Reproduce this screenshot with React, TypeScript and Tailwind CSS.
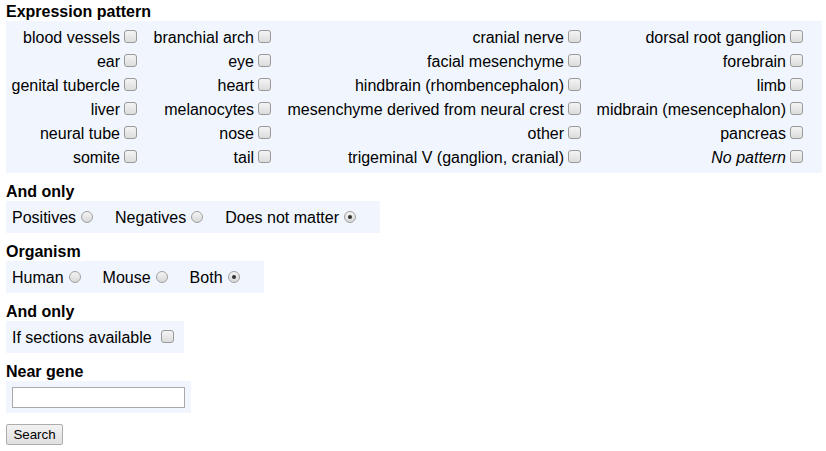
import React from "react";

const Checkbox = ({ className = "" }: { className?: string }) => (
  <span
    className={`inline-block w-[13px] h-[13px] shrink-0 rounded-[3px] border border-[#999999] bg-gradient-to-b from-[#f4f4f4] to-[#dcdcdc] ${className}`}
  />
);

const Radio = ({ checked = false }: { checked?: boolean }) => (
  <span className="ml-[5px] mr-[3px] mb-[3px] inline-flex w-[12px] h-[12px] shrink-0 items-center justify-center rounded-full border border-[#a0a0a0] bg-gradient-to-b from-[#f4f4f4] to-[#d8d8d8]">
    {checked && <span className="block w-[4px] h-[4px] rounded-full bg-[#333333]" />}
  </span>
);

const rows: [string, string, string, string][] = [
  ["blood vessels", "branchial arch", "cranial nerve", "dorsal root ganglion"],
  ["ear", "eye", "facial mesenchyme", "forebrain"],
  ["genital tubercle", "heart", "hindbrain (rhombencephalon)", "limb"],
  ["liver", "melanocytes", "mesenchyme derived from neural crest", "midbrain (mesencephalon)"],
  ["neural tube", "nose", "other", "pancreas"],
  ["somite", "tail", "trigeminal V (ganglion, cranial)", "No pattern"],
];

const Cell = ({ label }: { label: string }) => (
  <div className="flex h-[24px] items-center justify-end whitespace-nowrap">
    <span className={label === "No pattern" ? "italic" : ""}>{label}</span>
    <Checkbox className="ml-[4px] mr-[3px] mb-[4px]" />
  </div>
);

const Heading = ({ children }: { children: React.ReactNode }) => (
  <div className="font-bold text-[16px] leading-[19px] text-black">{children}</div>
);

export default function App() {
  return (
    <div
      className="pl-[6px] pr-[4px] pt-[2px] text-[16px] text-black bg-white min-h-[451px]"
      style={{ fontFamily: '"Liberation Sans", Arial, sans-serif' }}
    >
      <Heading>Expression pattern</Heading>
      <div className="bg-[#f1f6fe] pt-[5px] pb-[3px] pl-[6px]">
        <div className="grid grid-cols-[128px_119px_295px_207px] gap-x-[15px]">
          {rows.map((r, i) => (
            <React.Fragment key={i}>
              {r.map((l) => (
                <Cell key={l} label={l} />
              ))}
            </React.Fragment>
          ))}
        </div>
      </div>

      <div className="mt-[9px]">
        <Heading>And only</Heading>
        <div className="inline-flex h-[32px] items-center gap-[19px] bg-[#f1f6fe] pl-[6px] pr-[21px] pt-[2px]">
          <div className="flex items-center">
            Positives
            <Radio />
          </div>
          <div className="flex items-center">
            Negatives
            <Radio />
          </div>
          <div className="flex items-center">
            Does not matter
            <Radio checked />
          </div>
        </div>
      </div>

      <div className="mt-[9px]">
        <Heading>Organism</Heading>
        <div className="inline-flex h-[32px] items-center gap-[19px] bg-[#f1f6fe] pl-[6px] pr-[21px] pt-[2px]">
          <div className="flex items-center">
            Human
            <Radio />
          </div>
          <div className="flex items-center">
            Mouse
            <Radio />
          </div>
          <div className="flex items-center">
            Both
            <Radio checked />
          </div>
        </div>
      </div>

      <div className="mt-[9px]">
        <Heading>And only</Heading>
        <div className="inline-flex h-[32px] items-center bg-[#f1f6fe] pl-[6px] pr-[10px] pt-[2px]">
          If sections available
          <Checkbox className="ml-[9px] mb-[4px]" />
        </div>
      </div>

      <div className="mt-[9px]">
        <Heading>Near gene</Heading>
        <div className="inline-flex h-[32px] items-start bg-[#f1f6fe] pl-[6px] pr-[6px] pt-[6px]">
          <input
            type="text"
            className="block w-[173px] h-[21px] border border-[#a9a9a9] bg-white px-[2px] text-[13px] outline-none"
          />
        </div>
      </div>

      <div className="mt-[11px]">
        <button
          type="button"
          className="block w-[57px] h-[21px] rounded-[2px] border border-[#adadad] bg-gradient-to-b from-[#f2f2f2] to-[#e0e0e0] text-[13.33px] leading-[19px] text-black"
          style={{ fontFamily: '"Liberation Sans", Arial, sans-serif' }}
        >
          Search
        </button>
      </div>
    </div>
  );
}
